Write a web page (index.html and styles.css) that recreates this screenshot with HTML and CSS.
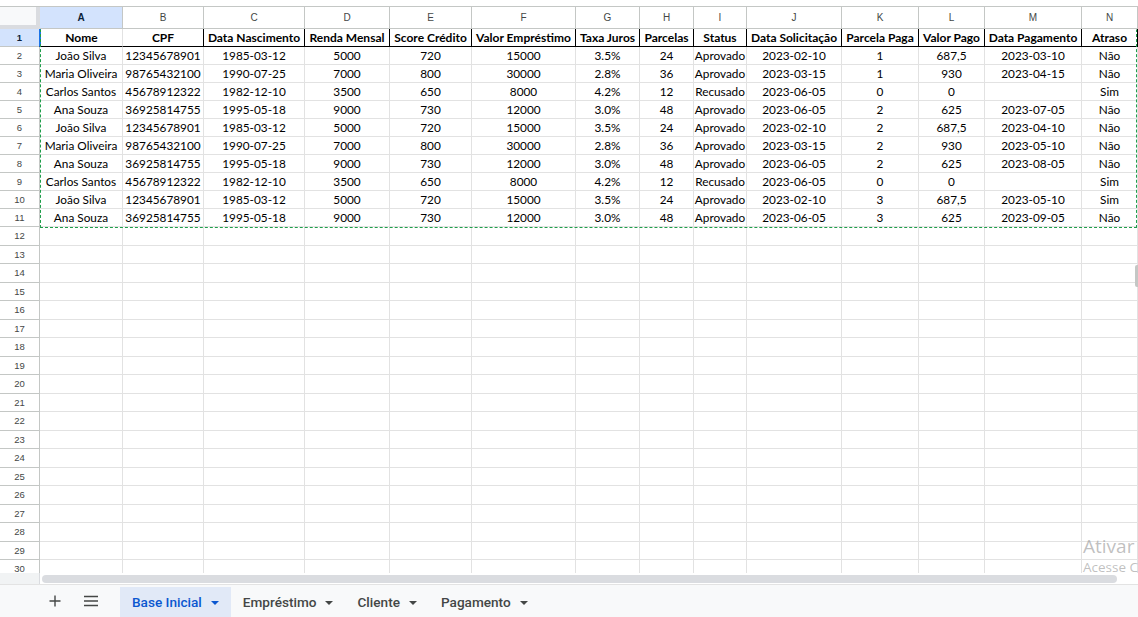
FILE: index.html
```html
<!DOCTYPE html>
<html lang="pt-BR">
<head>
<meta charset="utf-8">
<title>Base Inicial</title>
<link rel="stylesheet" href="styles.css">
</head>
<body>
<div class="app">
  <div class="top"></div>
  <div class="sheet">
    <div class="row">
      <div class="corner"></div>
      <div class="ch sel">A</div><div class="ch">B</div><div class="ch">C</div><div class="ch">D</div><div class="ch">E</div><div class="ch">F</div><div class="ch">G</div><div class="ch">H</div><div class="ch">I</div><div class="ch">J</div><div class="ch">K</div><div class="ch">L</div><div class="ch">M</div><div class="ch">N</div>
    </div>
    <div class="row hdr">
      <div class="rh sel">1</div>
      <div class="c a1">Nome</div><div class="c">CPF</div><div class="c">Data Nascimento</div><div class="c">Renda Mensal</div><div class="c">Score Crédito</div><div class="c">Valor Empréstimo</div><div class="c">Taxa Juros</div><div class="c">Parcelas</div><div class="c">Status</div><div class="c">Data Solicitação</div><div class="c">Parcela Paga</div><div class="c">Valor Pago</div><div class="c">Data Pagamento</div><div class="c">Atraso</div>
    </div>
    <div class="row"><div class="rh">2</div><div class="c">João Silva</div><div class="c">12345678901</div><div class="c">1985-03-12</div><div class="c">5000</div><div class="c">720</div><div class="c">15000</div><div class="c">3.5%</div><div class="c">24</div><div class="c">Aprovado</div><div class="c">2023-02-10</div><div class="c">1</div><div class="c">687,5</div><div class="c">2023-03-10</div><div class="c">Não</div></div>
    <div class="row"><div class="rh">3</div><div class="c">Maria Oliveira</div><div class="c">98765432100</div><div class="c">1990-07-25</div><div class="c">7000</div><div class="c">800</div><div class="c">30000</div><div class="c">2.8%</div><div class="c">36</div><div class="c">Aprovado</div><div class="c">2023-03-15</div><div class="c">1</div><div class="c">930</div><div class="c">2023-04-15</div><div class="c">Não</div></div>
    <div class="row"><div class="rh">4</div><div class="c">Carlos Santos</div><div class="c">45678912322</div><div class="c">1982-12-10</div><div class="c">3500</div><div class="c">650</div><div class="c">8000</div><div class="c">4.2%</div><div class="c">12</div><div class="c">Recusado</div><div class="c">2023-06-05</div><div class="c">0</div><div class="c">0</div><div class="c"></div><div class="c">Sim</div></div>
    <div class="row"><div class="rh">5</div><div class="c">Ana Souza</div><div class="c">36925814755</div><div class="c">1995-05-18</div><div class="c">9000</div><div class="c">730</div><div class="c">12000</div><div class="c">3.0%</div><div class="c">48</div><div class="c">Aprovado</div><div class="c">2023-06-05</div><div class="c">2</div><div class="c">625</div><div class="c">2023-07-05</div><div class="c">Não</div></div>
    <div class="row"><div class="rh">6</div><div class="c">João Silva</div><div class="c">12345678901</div><div class="c">1985-03-12</div><div class="c">5000</div><div class="c">720</div><div class="c">15000</div><div class="c">3.5%</div><div class="c">24</div><div class="c">Aprovado</div><div class="c">2023-02-10</div><div class="c">2</div><div class="c">687,5</div><div class="c">2023-04-10</div><div class="c">Não</div></div>
    <div class="row"><div class="rh">7</div><div class="c">Maria Oliveira</div><div class="c">98765432100</div><div class="c">1990-07-25</div><div class="c">7000</div><div class="c">800</div><div class="c">30000</div><div class="c">2.8%</div><div class="c">36</div><div class="c">Aprovado</div><div class="c">2023-03-15</div><div class="c">2</div><div class="c">930</div><div class="c">2023-05-10</div><div class="c">Não</div></div>
    <div class="row"><div class="rh">8</div><div class="c">Ana Souza</div><div class="c">36925814755</div><div class="c">1995-05-18</div><div class="c">9000</div><div class="c">730</div><div class="c">12000</div><div class="c">3.0%</div><div class="c">48</div><div class="c">Aprovado</div><div class="c">2023-06-05</div><div class="c">2</div><div class="c">625</div><div class="c">2023-08-05</div><div class="c">Não</div></div>
    <div class="row"><div class="rh">9</div><div class="c">Carlos Santos</div><div class="c">45678912322</div><div class="c">1982-12-10</div><div class="c">3500</div><div class="c">650</div><div class="c">8000</div><div class="c">4.2%</div><div class="c">12</div><div class="c">Recusado</div><div class="c">2023-06-05</div><div class="c">0</div><div class="c">0</div><div class="c"></div><div class="c">Sim</div></div>
    <div class="row"><div class="rh">10</div><div class="c">João Silva</div><div class="c">12345678901</div><div class="c">1985-03-12</div><div class="c">5000</div><div class="c">720</div><div class="c">15000</div><div class="c">3.5%</div><div class="c">24</div><div class="c">Aprovado</div><div class="c">2023-02-10</div><div class="c">3</div><div class="c">687,5</div><div class="c">2023-05-10</div><div class="c">Sim</div></div>
    <div class="row"><div class="rh">11</div><div class="c">Ana Souza</div><div class="c">36925814755</div><div class="c">1995-05-18</div><div class="c">9000</div><div class="c">730</div><div class="c">12000</div><div class="c">3.0%</div><div class="c">48</div><div class="c">Aprovado</div><div class="c">2023-06-05</div><div class="c">3</div><div class="c">625</div><div class="c">2023-09-05</div><div class="c">Não</div></div>
    <div class="row"><div class="rh">12</div><div class="c"></div><div class="c"></div><div class="c"></div><div class="c"></div><div class="c"></div><div class="c"></div><div class="c"></div><div class="c"></div><div class="c"></div><div class="c"></div><div class="c"></div><div class="c"></div><div class="c"></div><div class="c"></div></div>
    <div class="row"><div class="rh">13</div><div class="c"></div><div class="c"></div><div class="c"></div><div class="c"></div><div class="c"></div><div class="c"></div><div class="c"></div><div class="c"></div><div class="c"></div><div class="c"></div><div class="c"></div><div class="c"></div><div class="c"></div><div class="c"></div></div>
    <div class="row"><div class="rh">14</div><div class="c"></div><div class="c"></div><div class="c"></div><div class="c"></div><div class="c"></div><div class="c"></div><div class="c"></div><div class="c"></div><div class="c"></div><div class="c"></div><div class="c"></div><div class="c"></div><div class="c"></div><div class="c"></div></div>
    <div class="row"><div class="rh">15</div><div class="c"></div><div class="c"></div><div class="c"></div><div class="c"></div><div class="c"></div><div class="c"></div><div class="c"></div><div class="c"></div><div class="c"></div><div class="c"></div><div class="c"></div><div class="c"></div><div class="c"></div><div class="c"></div></div>
    <div class="row"><div class="rh">16</div><div class="c"></div><div class="c"></div><div class="c"></div><div class="c"></div><div class="c"></div><div class="c"></div><div class="c"></div><div class="c"></div><div class="c"></div><div class="c"></div><div class="c"></div><div class="c"></div><div class="c"></div><div class="c"></div></div>
    <div class="row"><div class="rh">17</div><div class="c"></div><div class="c"></div><div class="c"></div><div class="c"></div><div class="c"></div><div class="c"></div><div class="c"></div><div class="c"></div><div class="c"></div><div class="c"></div><div class="c"></div><div class="c"></div><div class="c"></div><div class="c"></div></div>
    <div class="row"><div class="rh">18</div><div class="c"></div><div class="c"></div><div class="c"></div><div class="c"></div><div class="c"></div><div class="c"></div><div class="c"></div><div class="c"></div><div class="c"></div><div class="c"></div><div class="c"></div><div class="c"></div><div class="c"></div><div class="c"></div></div>
    <div class="row"><div class="rh">19</div><div class="c"></div><div class="c"></div><div class="c"></div><div class="c"></div><div class="c"></div><div class="c"></div><div class="c"></div><div class="c"></div><div class="c"></div><div class="c"></div><div class="c"></div><div class="c"></div><div class="c"></div><div class="c"></div></div>
    <div class="row"><div class="rh">20</div><div class="c"></div><div class="c"></div><div class="c"></div><div class="c"></div><div class="c"></div><div class="c"></div><div class="c"></div><div class="c"></div><div class="c"></div><div class="c"></div><div class="c"></div><div class="c"></div><div class="c"></div><div class="c"></div></div>
    <div class="row"><div class="rh">21</div><div class="c"></div><div class="c"></div><div class="c"></div><div class="c"></div><div class="c"></div><div class="c"></div><div class="c"></div><div class="c"></div><div class="c"></div><div class="c"></div><div class="c"></div><div class="c"></div><div class="c"></div><div class="c"></div></div>
    <div class="row"><div class="rh">22</div><div class="c"></div><div class="c"></div><div class="c"></div><div class="c"></div><div class="c"></div><div class="c"></div><div class="c"></div><div class="c"></div><div class="c"></div><div class="c"></div><div class="c"></div><div class="c"></div><div class="c"></div><div class="c"></div></div>
    <div class="row"><div class="rh">23</div><div class="c"></div><div class="c"></div><div class="c"></div><div class="c"></div><div class="c"></div><div class="c"></div><div class="c"></div><div class="c"></div><div class="c"></div><div class="c"></div><div class="c"></div><div class="c"></div><div class="c"></div><div class="c"></div></div>
    <div class="row"><div class="rh">24</div><div class="c"></div><div class="c"></div><div class="c"></div><div class="c"></div><div class="c"></div><div class="c"></div><div class="c"></div><div class="c"></div><div class="c"></div><div class="c"></div><div class="c"></div><div class="c"></div><div class="c"></div><div class="c"></div></div>
    <div class="row"><div class="rh">25</div><div class="c"></div><div class="c"></div><div class="c"></div><div class="c"></div><div class="c"></div><div class="c"></div><div class="c"></div><div class="c"></div><div class="c"></div><div class="c"></div><div class="c"></div><div class="c"></div><div class="c"></div><div class="c"></div></div>
    <div class="row"><div class="rh">26</div><div class="c"></div><div class="c"></div><div class="c"></div><div class="c"></div><div class="c"></div><div class="c"></div><div class="c"></div><div class="c"></div><div class="c"></div><div class="c"></div><div class="c"></div><div class="c"></div><div class="c"></div><div class="c"></div></div>
    <div class="row"><div class="rh">27</div><div class="c"></div><div class="c"></div><div class="c"></div><div class="c"></div><div class="c"></div><div class="c"></div><div class="c"></div><div class="c"></div><div class="c"></div><div class="c"></div><div class="c"></div><div class="c"></div><div class="c"></div><div class="c"></div></div>
    <div class="row"><div class="rh">28</div><div class="c"></div><div class="c"></div><div class="c"></div><div class="c"></div><div class="c"></div><div class="c"></div><div class="c"></div><div class="c"></div><div class="c"></div><div class="c"></div><div class="c"></div><div class="c"></div><div class="c"></div><div class="c"></div></div>
    <div class="row"><div class="rh">29</div><div class="c"></div><div class="c"></div><div class="c"></div><div class="c"></div><div class="c"></div><div class="c"></div><div class="c"></div><div class="c"></div><div class="c"></div><div class="c"></div><div class="c"></div><div class="c"></div><div class="c"></div><div class="c"></div></div>
    <div class="row"><div class="rh">30</div><div class="c"></div><div class="c"></div><div class="c"></div><div class="c"></div><div class="c"></div><div class="c"></div><div class="c"></div><div class="c"></div><div class="c"></div><div class="c"></div><div class="c"></div><div class="c"></div><div class="c"></div><div class="c"></div></div>
    <div class="copy-range"></div>
    <div class="side-handle"></div>
    <div class="watermark">
      <div class="wm-title">Ativar o Windows</div>
      <div class="wm-sub">Acesse Configurações</div>
    </div>
  </div>
  <div class="hscroll">
    <div class="hs-corner"></div>
    <div class="hs-track"><div class="thumb"></div></div>
  </div>
  <div class="tabs">
    <button class="tool plus" aria-label="Adicionar página">
      <svg width="14" height="14" viewBox="0 0 14 14"><path d="M7 1.5v11M1.5 7h11" stroke="#444746" stroke-width="1.4" fill="none"/></svg>
    </button>
    <button class="tool menu" aria-label="Todas as páginas">
      <svg width="14" height="12" viewBox="0 0 14 12"><path d="M0 1.5h14M0 6h14M0 10.5h14" stroke="#444746" stroke-width="1.5" fill="none"/></svg>
    </button>
    <div class="tab active"><span>Base Inicial</span><i class="caret"></i></div>
    <div class="tab"><span>Empréstimo</span><i class="caret"></i></div>
    <div class="tab"><span>Cliente</span><i class="caret"></i></div>
    <div class="tab"><span>Pagamento</span><i class="caret"></i></div>
  </div>
</div>
</body>
</html>
```
FILE: styles.css
```css
* { box-sizing: border-box; }
html, body { margin: 0; padding: 0; background: #fff; }
body { overflow: hidden; }

.app {
  width: 1138px;
  height: 617px;
  display: flex;
  flex-direction: column;
  overflow: hidden;
}

.top {
  height: 6px;
  flex: none;
  background: #fff;
}

.sheet {
  position: relative;
  flex: none;
  height: 567px;
  overflow: hidden;
  display: grid;
  grid-template-columns: 40px 83px 81px 101px 85px 82px 104px 64px 54px 53px 95px 77px 66px 97px 56px;
  grid-template-rows: 22px repeat(11, 18px) repeat(19, 18.5px);
  border-top: 1px solid #c4c7c5;
  font-family: Lato, "Open Sans", sans-serif;
  font-size: 11.8px;
  color: #000;
}

.row { display: contents; }

.corner {
  background: #f8f9fa;
  border-right: 4px solid #dadce0;
  border-bottom: 4px solid #dadce0;
}

.ch {
  display: flex;
  align-items: center;
  justify-content: center;
  font-family: "Liberation Sans", Arial, sans-serif;
  font-size: 10px;
  color: #444746;
  background: #fff;
  border-right: 1px solid #c4c7c5;
  border-bottom: 1px solid #c4c7c5;
}
.ch.sel {
  background: #d3e3fd;
  color: #0b1f3a;
  font-weight: bold;
}

.rh {
  display: flex;
  align-items: center;
  justify-content: center;
  font-family: "Liberation Sans", Arial, sans-serif;
  font-size: 9.5px;
  color: #444746;
  background: #fff;
  border-right: 1px solid #c4c7c5;
  border-bottom: 1px solid #c4c7c5;
}
.rh.sel {
  background: #d3e3fd;
  color: #0b1f3a;
  font-weight: bold;
}

.c {
  display: flex;
  align-items: flex-end;
  justify-content: center;
  padding-bottom: 1px;
  line-height: 15px;
  white-space: nowrap;
  overflow: visible;
  border-right: 1px solid #e2e2e2;
  border-bottom: 1px solid #e2e2e2;
}

.hdr .c {
  font-size: 12px;
  font-weight: bold;
  border-right: 1px solid #000;
  border-bottom: 1px solid #000;
}
.hdr .c.a1 {
  border-left: 2px solid #1a73e8;
  margin-left: -1px;
  border-right: 1px solid #e2e2e2;
}

.copy-range {
  position: absolute;
  left: 40px;
  top: 22px;
  width: 1097px;
  height: 199px;
  border: 1px dashed #1e9e4a;
  border-top-color: transparent;
  pointer-events: none;
}

.side-handle {
  position: absolute;
  right: 0;
  top: 258px;
  width: 3px;
  height: 22px;
  background: #c4c7c5;
  border-radius: 2px 0 0 2px;
}

.watermark {
  position: absolute;
  left: 1083px;
  top: 527px;
  font-family: "Open Sans", "Noto Sans", sans-serif;
  color: rgba(150, 150, 150, 0.6);
  white-space: nowrap;
  pointer-events: none;
}
.wm-title { font-size: 19px; line-height: 24px; }
.wm-sub { font-size: 13.5px; line-height: 18px; }

.hscroll {
  height: 12px;
  flex: none;
  display: flex;
  background: #fff;
  border-bottom: 1px solid #e3e3e3;
}
.hs-corner {
  width: 40px;
  background: #f1f3f4;
  border-right: 1px solid #dadce0;
}
.hs-track {
  flex: 1;
  padding: 2px 21px 0 2px;
}
.thumb {
  height: 8px;
  border-radius: 4px;
  background: #dadce0;
}

.tabs {
  flex: 1;
  display: flex;
  align-items: stretch;
  background: #f8f9fa;
  padding-left: 45px;
  font-family: Roboto, "Liberation Sans", sans-serif;
  font-size: 13.6px;
  font-weight: 500;
  color: #444746;
}
.tool {
  width: 20px;
  padding: 0;
  margin: 0;
  border: 0;
  background: transparent;
  display: flex;
  align-items: center;
  justify-content: center;
}
.tool.menu { margin-left: 16px; margin-right: 19px; }

.tab {
  display: flex;
  align-items: center;
  gap: 9px;
  padding: 0 12px 0 12px;
  margin-top: 2px;
}
.tab.active {
  background: #e1e9f7;
  color: #0b57d0;
}
.caret {
  width: 0;
  height: 0;
  border-left: 4px solid transparent;
  border-right: 4px solid transparent;
  border-top: 4px solid #444746;
  margin-top: 1px;
}
.tab.active .caret { border-top-color: #0b57d0; }
```
